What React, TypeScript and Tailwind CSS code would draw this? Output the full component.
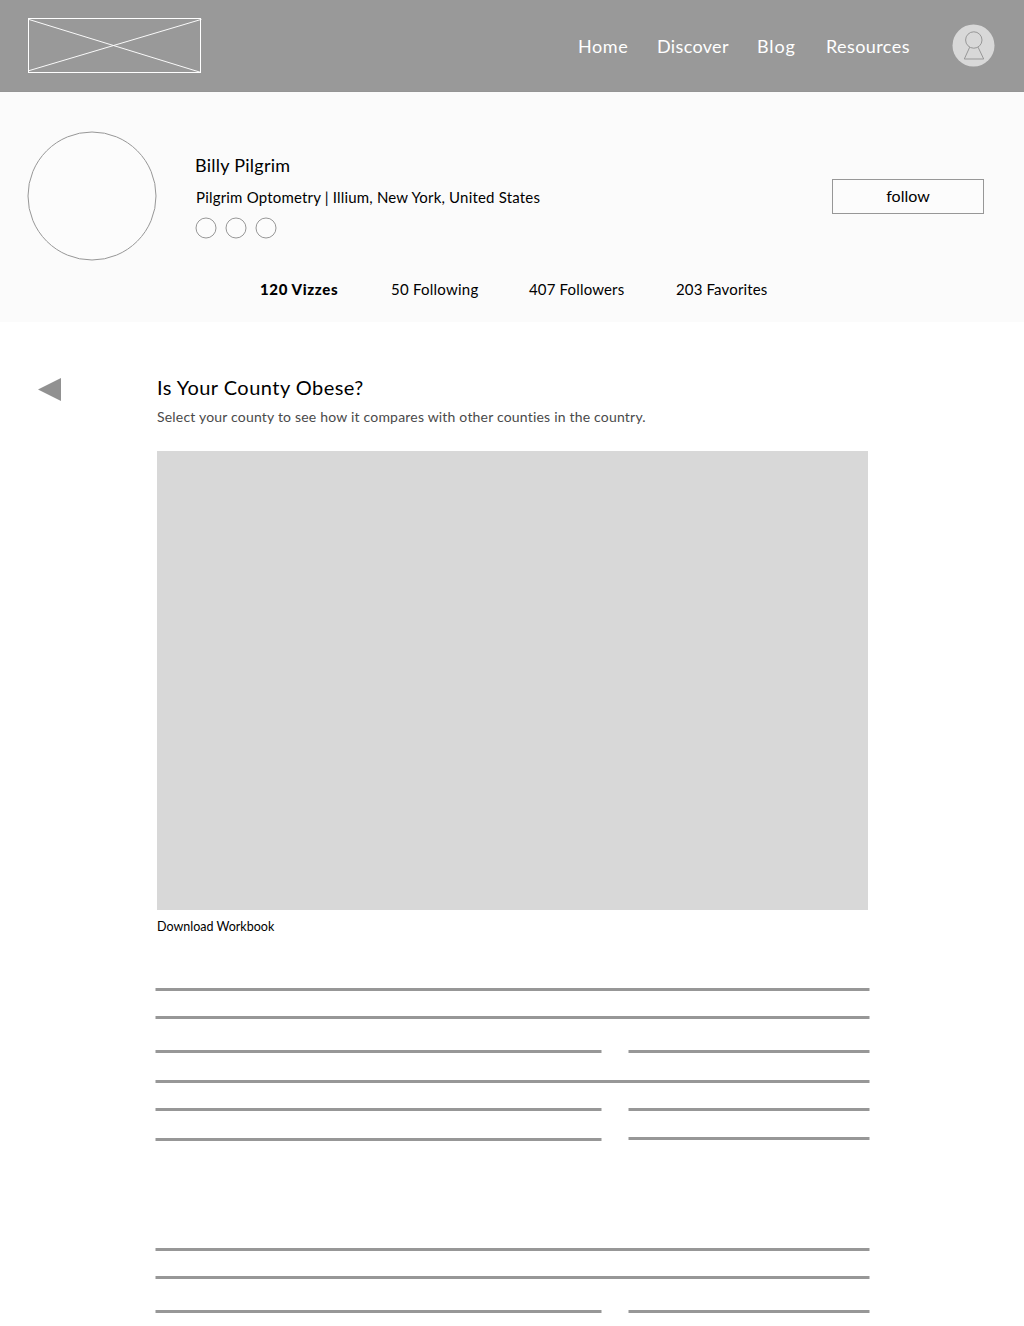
type Line = "full" | "split" | "offset";

const block: { kind: Line; gap: string }[] = [
  { kind: "full", gap: "mt-0" },
  { kind: "full", gap: "mt-[25px]" },
  { kind: "split", gap: "mt-[31px]" },
  { kind: "full", gap: "mt-[27px]" },
  { kind: "split", gap: "mt-[25px]" },
  { kind: "offset", gap: "mt-[26px]" },
];

function Rule({ className }: { className: string }) {
  return <div className={`h-[3px] border-x border-[#cbcbcb] bg-[#979797] bg-clip-padding ${className}`} />;
}

function TextLines({ lines, className }: { lines: typeof block; className: string }) {
  return (
    <div className={`w-[715px] ${className}`}>
      {lines.map(({ kind, gap }, i) =>
        kind === "full" ? (
          <Rule key={i} className={gap} />
        ) : (
          <div key={i} className={`flex items-start justify-between ${gap}`}>
            <Rule className={kind === "offset" ? "mt-px w-[447px]" : "w-[447px]"} />
            <Rule className="w-[242px]" />
          </div>
        )
      )}
    </div>
  );
}

function Logo() {
  return (
    <svg width="174" height="55" viewBox="0 0 174 55" fill="none" stroke="#fff" className="block">
      <rect x="0.5" y="0.5" width="172" height="54" />
      <path d="M1 1.5L171.5 54M0.5 52.8L173 1.5" strokeLinecap="square" strokeWidth="0.95" />
    </svg>
  );
}

function UserIcon() {
  return (
    <svg width="43" height="43" viewBox="0 0 43 43" fill="none" className="block">
      <circle cx="21.5" cy="21.5" r="21" fill="#d8d8d8" />
      <g stroke="#979797">
        <circle cx="21.8" cy="16" r="8.2" />
        <path d="M17.7 23.2L12.3 35H31.7L26.1 23.2" />
      </g>
    </svg>
  );
}

export default function App() {
  return (
    <div className="h-[1326px] w-[1024px] overflow-hidden bg-white font-['Lato',sans-serif] text-black">
      <header className="flex h-[92px] border-b border-[#959595] bg-[#999999] pl-7 text-lg leading-[22px] text-white">
        <div className="mt-[18px] w-[550px]">
          <Logo />
        </div>
        <nav className="mt-[35px] flex">
          <a className="w-[79px] tracking-[0.6px]">Home</a>
          <a className="w-[100px] tracking-[0.34px]">Discover</a>
          <a className="w-[69px] tracking-[0.9px]">Blog</a>
          <a className="w-[126px] tracking-[0.41px]">Resources</a>
        </nav>
        <div className="mt-6">
          <UserIcon />
        </div>
      </header>

      <section className="h-[230px] bg-[#fbfbfb]">
        <div className="flex pt-[39px] pl-[27px]">
          <svg width="130" height="130" viewBox="0 0 130 130" className="block shrink-0">
            <circle cx="65" cy="65" r="64" fill="#fcfcfc" stroke="#979797" />
          </svg>
          <div className="w-[637px] pt-[23px] pl-[38px]">
            <h1 className="text-lg leading-[22px] tracking-[0.25px]">Billy Pilgrim</h1>
            <p className="mt-[11px] pl-px text-[15px] leading-5 tracking-[0.186px]">
              Pilgrim Optometry | Illium, New York, United States
            </p>
            <div className="mt-2.5 flex gap-2">
              {[0, 1, 2].map((i) => (
                <svg key={i} width="22" height="22" viewBox="0 0 22 22" className="block">
                  <circle cx="11" cy="11" r="10" fill="#fcfcfc" stroke="#979797" />
                </svg>
              ))}
            </div>
          </div>
          <button className="mt-12 ml-[38px] h-[35px] w-[152px] border border-[#979797] bg-[#fcfcfc] pb-px text-base leading-5">
            follow
          </button>
        </div>
        <div className="mt-[18px] flex pl-[260px] text-[15px] leading-5">
          <span className="w-[131px] font-black tracking-[0.62px]">120 Vizzes</span>
          <span className="w-[138px] tracking-[0.24px]">50 Following</span>
          <span className="w-[147px] tracking-[0.16px]">407 Followers</span>
          <span className="tracking-[0.15px]">203 Favorites</span>
        </div>
      </section>

      <main className="flex pl-[38px]">
        <svg width="23" height="23" viewBox="0 0 23 23" className="mt-14 block shrink-0">
          <path d="M0 11.5L23 0V23Z" fill="#919191" />
        </svg>
        <div className="pt-[52px] pl-[94px]">
          <h2 className="pl-0.5 text-xl leading-[26px] tracking-[0.46px]">Is Your County Obese?</h2>
          <p className="mt-[7px] pl-0.5 text-sm leading-5 tracking-[0.195px] text-[#4a4a4a]">
            Select your county to see how it compares with other counties in the country.
          </p>
          <div className="mt-6 ml-0.5 h-[459px] w-[711px] bg-[#d8d8d8]" />
          <p className="mt-2 pl-0.5 text-[12.5px] leading-[18px]">Download Workbook</p>
          <TextLines lines={block} className="mt-[52px]" />
          <TextLines lines={block.slice(0, 3)} className="mt-[107px]" />
        </div>
      </main>
    </div>
  );
}
